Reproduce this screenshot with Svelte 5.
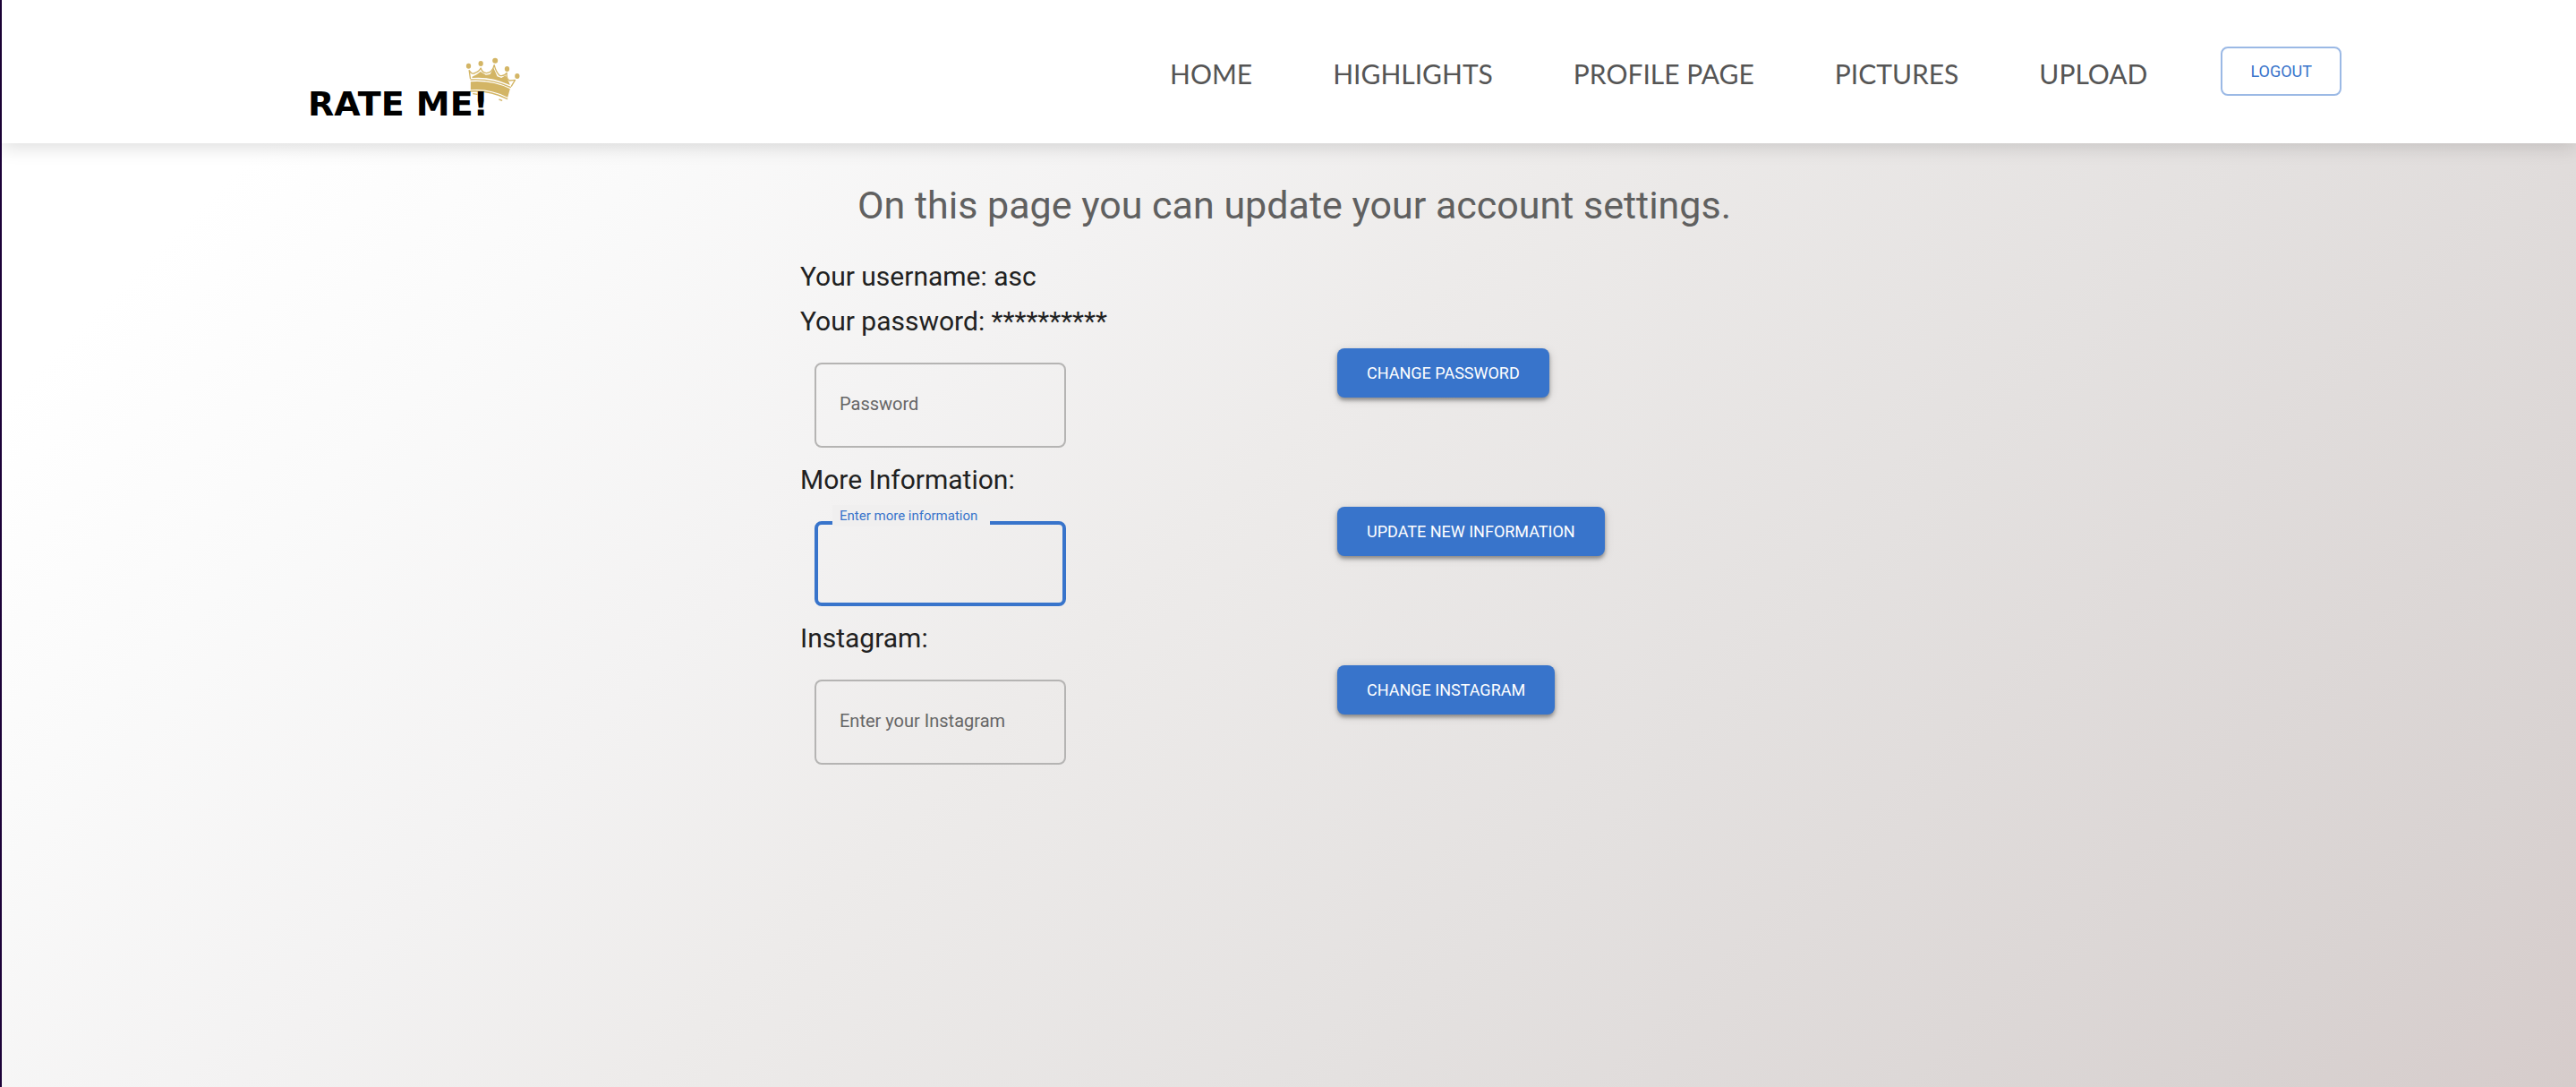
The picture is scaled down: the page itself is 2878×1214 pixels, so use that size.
<script>
  const links = ['HOME', 'HIGHLIGHTS', 'PROFILE PAGE', 'PICTURES', 'UPLOAD'];
  let password = $state('');
  let info = $state('');
  let instagram = $state('');
</script>

<div class="page">
  <header>
    <a class="logo" href="#home" aria-label="Rate me home">
      <svg class="crown" viewBox="570 40 185 150" aria-hidden="true">
        <g fill="#d3b565">
          <ellipse cx="580" cy="69" rx="8" ry="9" />
          <ellipse cx="621" cy="61" rx="8" ry="9" />
          <ellipse cx="669" cy="51" rx="9" ry="9" />
          <ellipse cx="709" cy="79" rx="8" ry="9" />
          <ellipse cx="743" cy="103" rx="8" ry="9" />
          <path d="M592 105L607 98L620 88L638 99L652 97L664 76L676 104L690 109L704 101L714 120L719 133Q655 103 592 109Z" />
          <path d="M587 122Q660 117 719 146L711 174Q650 143 587 149Z" />
        </g>
        <g fill="none" stroke="#d3b565" stroke-width="4" stroke-linejoin="round">
          <path d="M586 112L582 84Q590 99 602 92Q616 87 621 76Q626 92 640 93Q660 91 666 66Q672 90 684 101Q698 105 708 92Q706 112 717 118Q730 117 736 116L723 138" />
          <path d="M586 115Q660 111 722 141M585 154Q650 149 711 180M594 162L610 164M682 181L693 185" />
        </g>
      </svg>
      <span class="wordmark">RATE ME!</span>
    </a>
    <nav>
      {#each links as link}
        <a href="#{link.toLowerCase().replace(' ', '-')}">{link}</a>
      {/each}
    </nav>
    <button class="logout" type="button">LOGOUT</button>
  </header>

  <main>
    <h1>On this page you can update your account settings.</h1>
    <section class="settings">
      <p>Your username: asc</p>
      <p>Your password: **********</p>
      <form class="row">
        <div class="field">
          <input id="password" type="password" placeholder=" " bind:value={password} />
          <label for="password">Password</label>
        </div>
        <button type="button">CHANGE PASSWORD</button>
      </form>
      <p>More Information:</p>
      <form class="row">
        <div class="field active">
          <input id="info" type="text" placeholder=" " bind:value={info} />
          <label for="info">Enter more information</label>
        </div>
        <button type="button">UPDATE NEW INFORMATION</button>
      </form>
      <p>Instagram:</p>
      <form class="row">
        <div class="field">
          <input id="instagram" type="text" placeholder=" " bind:value={instagram} />
          <label for="instagram">Enter your Instagram</label>
        </div>
        <button type="button">CHANGE INSTAGRAM</button>
      </form>
    </section>
  </main>
</div>

<style>
  :global(body) {
    margin: 0;
  }

  .page {
    box-sizing: border-box;
    min-height: 100vh;
    border-left: 2px solid #1c0238;
    background: linear-gradient(135deg, #ffffff 11%, #fafafa 22%, #f3f2f2 36%, #edebea 47%, #e4e1e0 66%, #d9d3d2 90%, #d6cccb 100%);
    color: #212121;
    font-family: Roboto, sans-serif;
  }

  header {
    display: flex;
    align-items: flex-start;
    box-sizing: border-box;
    height: 160px;
    padding: 52px 262px 0 342px;
    background: #ffffff;
    box-shadow: 0 4px 20px rgba(0, 0, 0, 0.14);
  }

  .logo {
    position: relative;
    margin-top: 44px;
    color: #000000;
    text-decoration: none;
  }

  .wordmark {
    position: relative;
    font-family: "DejaVu Sans", sans-serif;
    font-size: 38px;
    font-weight: 700;
    line-height: 40px;
  }

  .crown {
    position: absolute;
    top: -32px;
    left: 176px;
    width: 62px;
    height: 50px;
  }

  nav {
    display: flex;
    gap: 90px;
    margin-left: auto;
    margin-right: 82px;
    padding-top: 12px;
    font-family: Lato, sans-serif;
    font-size: 30px;
    line-height: 36px;
  }

  nav a {
    color: #555555;
    text-decoration: none;
  }

  button {
    height: 55px;
    padding: 0 33px;
    border: 0;
    border-radius: 8px;
    background: #3874cb;
    box-shadow: 0 3px 4px rgba(0, 0, 0, 0.36), 0 2px 12px rgba(0, 0, 0, 0.12);
    color: #ffffff;
    font: 400 18px/24px Roboto, sans-serif;
  }

  .logout {
    padding: 0 31px;
    border: 2px solid #9bb9e5;
    background: transparent;
    box-shadow: none;
    color: #3874cb;
  }

  h1 {
    margin: 0;
    padding: 42px 0 28px 12px;
    color: #606060;
    font-size: 43px;
    font-weight: 400;
    line-height: 54px;
    text-align: center;
  }

  .settings {
    width: 1100px;
    margin: 0 auto;
    padding-left: 8px;
  }

  p {
    margin: 0;
    font-size: 30px;
    line-height: 50px;
  }

  .row {
    display: grid;
    grid-template-columns: 600px 1fr;
    align-items: start;
    justify-items: start;
    box-sizing: border-box;
    height: 127px;
    padding-top: 5px;
  }

  .field {
    position: relative;
    width: 281px;
    margin: 16px 0 0 16px;
  }

  input {
    display: block;
    box-sizing: border-box;
    width: 100%;
    height: 95px;
    padding: 0 28px;
    border: 2px solid #b5b4b3;
    border-radius: 8px;
    outline: 0;
    background: transparent;
    color: inherit;
    font: 400 20px/24px Roboto, sans-serif;
  }

  label {
    position: absolute;
    top: 34px;
    left: 28px;
    color: #666666;
    font-size: 20px;
    line-height: 24px;
    pointer-events: none;
  }

  .active input {
    border: 4px solid #3874cb;
  }

  .active label {
    top: -18px;
    left: 20px;
    padding: 0 14px 0 8px;
    background: #f0efef;
    color: #3874cb;
    font-size: 15px;
  }
</style>
